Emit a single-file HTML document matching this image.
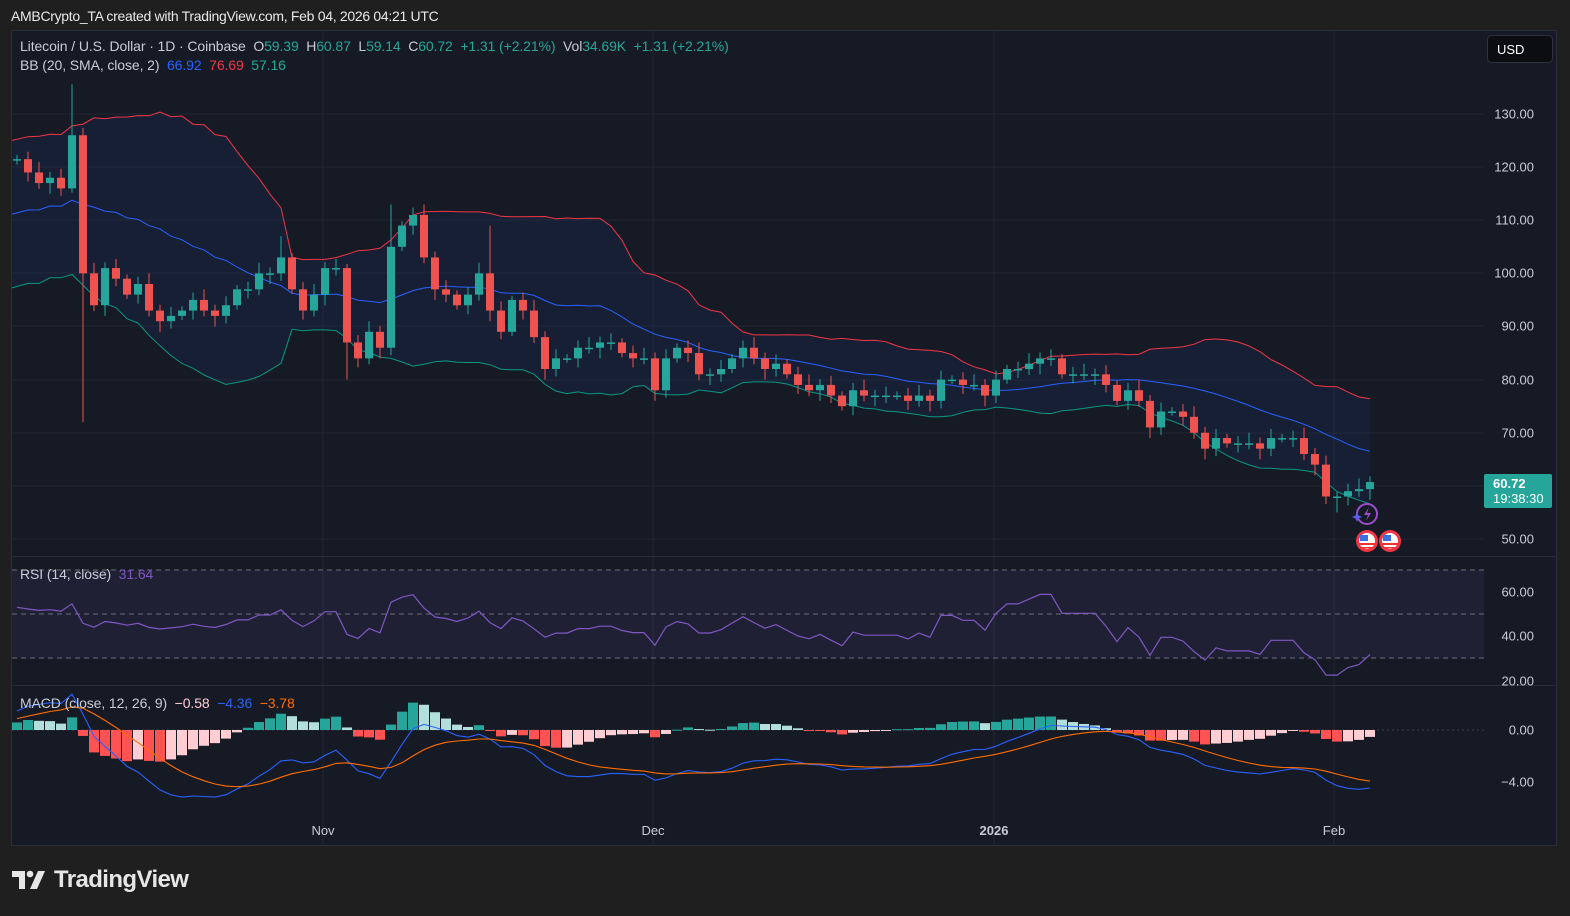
<!DOCTYPE html>
<html><head><meta charset="utf-8">
<style>
html,body{margin:0;padding:0;background:#1f1f1f;width:1570px;height:916px;overflow:hidden;font-family:"Liberation Sans",sans-serif;}
#hdr{position:absolute;left:11px;top:8px;color:#e8e8e8;font-size:14px;letter-spacing:-0.3px;}
#panel{position:absolute;left:11px;top:30px;width:1546px;height:816px;background:#161a25;border:1px solid #2a2e39;box-sizing:border-box;}
svg{position:absolute;left:0;top:0;}
.lg{position:absolute;font-size:14px;color:#c8ccd6;white-space:nowrap;letter-spacing:-0.1px}
.g{color:#26a69a}
#logo{position:absolute;left:12px;top:866px;color:#e6e6e6;font-size:24px;font-weight:bold;letter-spacing:-0.6px;display:flex;align-items:center}
</style></head><body>
<div id="hdr">AMBCrypto_TA created with TradingView.com, Feb 04, 2026 04:21 UTC</div>
<div id="panel"></div>
<svg id="s" width="1570" height="916" xmlns="http://www.w3.org/2000/svg"></svg>
<div class="lg" style="left:20px;top:38px">Litecoin / U.S. Dollar · 1D · Coinbase &nbsp;O<span class="g">59.39</span> &nbsp;H<span class="g">60.87</span> &nbsp;L<span class="g">59.14</span> &nbsp;C<span class="g">60.72</span> &nbsp;<span class="g">+1.31 (+2.21%)</span> &nbsp;Vol<span class="g">34.69K</span> &nbsp;<span class="g">+1.31 (+2.21%)</span></div>
<div class="lg" style="left:20px;top:57px">BB (20, SMA, close, 2) &nbsp;<span style="color:#2962ff">66.92</span> &nbsp;<span style="color:#f23645">76.69</span> &nbsp;<span style="color:#22ab94">57.16</span></div>
<div class="lg" style="left:20px;top:566px">RSI (14, close) &nbsp;<span style="color:#7e57c2">31.64</span></div>
<div class="lg" style="left:20px;top:695px">MACD (close, 12, 26, 9) &nbsp;<span style="color:#ffcdd2">−0.58</span> &nbsp;<span style="color:#2962ff">−4.36</span> &nbsp;<span style="color:#ff6d00">−3.78</span></div>
<div id="logo"><svg width="34" height="20" viewBox="0 0 34 20" style="position:static;margin-right:8px"><path d="M0 1h13v18h-6V7H0z" fill="#e6e6e6"/><circle cx="18" cy="4" r="3.3" fill="#e6e6e6"/><path d="M26 1h7l-8 18h-7z" fill="#e6e6e6"/></svg>TradingView</div>
<script>
var S=document.getElementById('s'),out='';
function add(t){out+=t;}
var C=[121.5,119,117,118,116,126,100,94,101,99,96,98,93,91,92,93,95,93,92,94,97,97,100,100,103,97,93,96,101,101,87,84,89,86,105,109,111,103,97,96,94,96,100,93,89,95,93,88,82,84,84,86,86,87,87,85,84,84,78,84,86,85,81,81,82,84,86,84,82,83,81,79,78,79,77,75,78,77,77,77,77,76,77,76,80,80,79,79,77,80,82,82,83,84,84,81,81,81,81,79,76,78,76,71,74,74,73,70,67,69,68,68,68,67,69,69,69,66,64,58,58,59,59.39,60.72];
var pre=[];for(var i=0;i<45;i++){pre.push(110+6.5*(i%2?1:-1)+(i>38?3:0));}
var A=pre.concat(C),P=pre.length;
function X(i){return 17+11*(i-P);}
function Y(p){return 114+(130-p)*5.3125;}
var hg=[114,167,220,273,326,380,433,486,539];
hg.forEach(function(y){add('<line x1="12" x2="1484" y1="'+y+'" y2="'+y+'" stroke="#222633"/>');});
[323,653,994,1334].forEach(function(x){add('<line x1="'+x+'" x2="'+x+'" y1="31" y2="846" stroke="#222633"/>');});
add('<line x1="12" x2="1556" y1="556.5" y2="556.5" stroke="#2a2e39"/>');
add('<line x1="12" x2="1556" y1="685.5" y2="685.5" stroke="#2a2e39"/>');
var up=[],mid=[],lo=[];
for(var i=P;i<A.length;i++){var s=0;for(var k=i-19;k<=i;k++)s+=A[k];var m=s/20,v=0;for(var k=i-19;k<=i;k++)v+=(A[k]-m)*(A[k]-m);var sd=Math.sqrt(v/20);var xx=(i==P)?12:X(i);up.push([xx,Y(m+2*sd)]);mid.push([xx,Y(m)]);lo.push([xx,Y(m-2*sd)]);}
function pl(a){return a.map(function(p){return p[0].toFixed(1)+','+p[1].toFixed(1)}).join(' ');}
add('<polygon points="'+pl(up)+' '+pl(lo.slice().reverse())+'" fill="rgba(41,98,255,0.07)"/>');
add('<polyline points="'+pl(up)+'" fill="none" stroke="#f23645" stroke-width="1"/>');
add('<polyline points="'+pl(mid)+'" fill="none" stroke="#2962ff" stroke-width="1"/>');
add('<polyline points="'+pl(lo)+'" fill="none" stroke="#089981" stroke-width="1"/>');
for(var i=P;i<A.length;i++){var o=A[i-1],c=A[i],x=X(i);if(i==P)o=121.3;if(i==A.length-1)o=59.39;
var hi=Math.max(o,c)+0.8+((i*7)%5)*0.3,lw=Math.min(o,c)-0.8-((i*3)%5)*0.3;
if(i==P+5)hi=135.6;if(i==P+6)lw=72;if(i==P+34)hi=113;if(i==P+24)hi=107;if(i==P+43)hi=109;if(i==P+30)lw=80;if(i==P+120)lw=55;
var col=c>=o?'#26a69a':'#ef5350';var t=Y(Math.max(o,c)),b=Y(Math.min(o,c));if(b-t<1.5)b=t+1.5;
add('<line x1="'+x+'" x2="'+x+'" y1="'+Y(hi)+'" y2="'+Y(lw)+'" stroke="'+col+'"/>');
add('<rect x="'+(x-4)+'" y="'+t+'" width="8" height="'+(b-t)+'" fill="'+col+'"/>');}
add('<rect x="12" y="570" width="1472" height="88" fill="rgba(126,87,194,0.1)"/>');
[570,614,658].forEach(function(y){add('<line x1="12" x2="1484" y1="'+y+'" y2="'+y+'" stroke="#6a6d78" stroke-dasharray="5,4"/>');});
var ag=0,al=0,rs=[];for(var i=1;i<A.length;i++){var d=A[i]-A[i-1],g=d>0?d:0,l=d<0?-d:0;if(i<=14){ag+=g/14;al+=l/14;}else{ag=(ag*13+g)/14;al=(al*13+l)/14;}if(i>=P)rs.push([X(i),592+(60-(100-100/(1+ag/(al||1e-9))))*2.2]);}
add('<polyline points="'+pl(rs)+'" fill="none" stroke="#7e57c2" stroke-width="1.2"/>');
var e12=A[0],e26=A[0],sg=0,ml=[],sl=[];
for(var i=0;i<A.length;i++){e12=e12+(A[i]-e12)*2/13;e26=e26+(A[i]-e26)*2/27;var m=e12-e26;sg=i==0?m:sg+(m-sg)*0.2;if(i>=P){ml.push(m);sl.push(sg);}}
function MY(v){return 730-v*13;}
add('<line x1="12" x2="1484" y1="730" y2="730" stroke="#3a3e4a" stroke-dasharray="2,3"/>');
var ph=0;for(var j=0;j<ml.length;j++){var h=ml[j]-sl[j],x=X(j+P),col;if(h>=0)col=h>=ph?'#26a69a':'#b2dfdb';else col=h<ph?'#ff5252':'#ffcdd2';ph=h;var y1=MY(Math.max(h,0)),y2=MY(Math.min(h,0));add('<rect x="'+(x-5)+'" y="'+y1+'" width="10" height="'+Math.max(y2-y1,1)+'" fill="'+col+'"/>');}
add('<polyline points="'+pl(ml.map(function(v,j){return[X(j+P),MY(v)]}))+'" fill="none" stroke="#2962ff" stroke-width="1.1"/>');
add('<polyline points="'+pl(sl.map(function(v,j){return[X(j+P),MY(v)]}))+'" fill="none" stroke="#ff6d00" stroke-width="1.1"/>');
var lbl=[['130.00',114],['120.00',167],['110.00',220],['100.00',273],['90.00',326],['80.00',380],['70.00',433],['50.00',539],['60.00',592],['40.00',636],['20.00',681],['0.00',730],['−4.00',782]];
lbl.forEach(function(a){add('<text x="1534" y="'+(a[1]+4.5)+'" text-anchor="end" fill="#c8ccd6" font-size="13" font-family="Liberation Sans">'+a[0]+'</text>');});
[['Nov',323,''],['Dec',653,''],['2026',994,'bold'],['Feb',1334,'']].forEach(function(a){add('<text x="'+a[1]+'" y="835" text-anchor="middle" fill="#c8ccd6" font-size="13" font-weight="'+a[2]+'" font-family="Liberation Sans">'+a[0]+'</text>');});
add('<rect x="1484" y="474" width="68" height="34" rx="2" fill="#26a69a"/>');
add('<text x="1493" y="488" fill="#fff" font-size="13" font-weight="bold" font-family="Liberation Sans">60.72</text>');
add('<text x="1493" y="503" fill="#fff" font-size="13" font-family="Liberation Sans">19:38:30</text>');
add('<rect x="1487.5" y="35.5" width="65" height="27" rx="4" fill="#0c0d10" stroke="#2f323c"/>');
add('<text x="1497" y="54" fill="#fff" font-size="13" font-family="Liberation Sans">USD</text>');
add('<circle cx="1367" cy="514" r="10" fill="none" stroke="#9c4dcc" stroke-width="2"/><path d="M1369 507l-5 8h4l-2 6 5-8h-4z" fill="#9c4dcc"/><path d="M1357 512l1.5 3.5 3.5 1.5-3.5 1.5-1.5 3.5-1.5-3.5-3.5-1.5 3.5-1.5z" fill="#5b5bf0"/>');
[1367,1390].forEach(function(x){add('<circle cx="'+x+'" cy="541" r="11" fill="#f23645"/><circle cx="'+x+'" cy="541" r="8" fill="#fff"/><path d="M'+(x-8)+' 543h16v2h-16zM'+(x-7)+' 547h14v1.5h-14z" fill="#e33"/><rect x="'+(x-7)+'" y="535" width="8" height="6" fill="#3b6fe0"/>');});
S.innerHTML=out;
</script>
</body></html>
